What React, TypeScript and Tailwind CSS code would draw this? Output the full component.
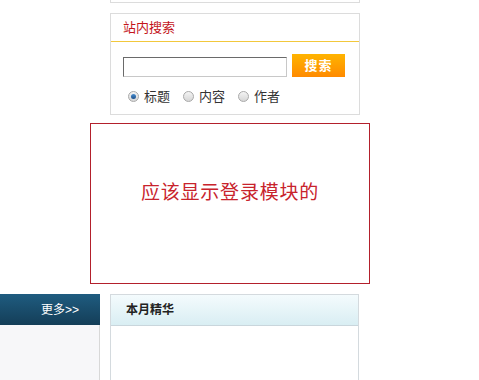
import React from 'react';

const font = { fontFamily: '"Liberation Sans", "Noto Sans CJK SC", sans-serif' };

const Radio: React.FC<{ checked?: boolean; label: string }> = ({ checked, label }) => (
  <label className="flex items-center gap-[5px]">
    <span className="flex h-[11px] w-[11px] items-center justify-center rounded-full border border-[#a9a9a9] bg-gradient-to-b from-[#f4f4f4] to-[#d6d6d6]">
      {checked && <span className="h-[5px] w-[5px] rounded-full bg-gradient-to-b from-[#4a8fd0] to-[#1c4f8a]" />}
    </span>
    <span className="text-[13px] leading-none text-[#333]">{label}</span>
  </label>
);

export default function App() {
  return (
    <div className="h-[380px] w-[479px] overflow-hidden bg-white" style={font}>
      {/* tail of box above */}
      <div className="ml-[110px] h-[3px] w-[250px] border-x border-b border-[#dcdcdc]" />

      {/* 站内搜索 */}
      <div className="ml-[110px] mt-[10px] h-[102px] w-[250px] border border-[#dcdcdc]">
        <div className="flex h-[28px] items-center border-b border-[#f2c83c] pl-[12px] text-[13px] text-[#c4161c]">
          站内搜索
        </div>
        <div className="flex items-end gap-[5px] pl-[12px] pt-[12px]">
          <input
            type="text"
            className="h-[20px] w-[164px] border border-b-[#c8c8c8] border-l-[#6a6a6a] border-r-[#c8c8c8] border-t-[#6a6a6a] outline-none"
          />
          <button className="h-[23px] w-[53px] bg-gradient-to-b from-[#ffb400] to-[#ff8a00] text-[13px] font-bold tracking-[1px] text-white">
            搜索
          </button>
        </div>
        <div className="flex items-center gap-[13px] pl-[17px] pt-[13px]">
          <Radio checked label="标题" />
          <Radio label="内容" />
          <Radio label="作者" />
        </div>
      </div>

      {/* 登录 */}
      <div className="ml-[90px] mt-[8px] h-[161px] w-[280px] border border-[#b3202c] pt-[59px] text-center text-[19px] leading-[20px] tracking-[0.8px] text-[#c8232c]">
        应该显示登录模块的
      </div>

      {/* 下方 */}
      <div className="mt-[10px] flex gap-[10px]">
        <div className="w-[100px]">
          <div className="flex h-[31px] items-center justify-end bg-gradient-to-b from-[#1f5c80] to-[#143e58] pr-[21px] text-[12px] text-white">
            更多&gt;&gt;
          </div>
          <div className="h-[60px] border-r border-[#d8d8d8] bg-[#f7f7f9]" />
        </div>
        <div className="h-[90px] w-[249px] border border-[#d4dade]">
          <div className="flex h-[31px] items-center border-b border-[#c9d6dc] bg-gradient-to-b from-[#f4fbfd] to-[#d9eef3] pl-[15px] text-[12px] font-bold text-[#222]">
            本月精华
          </div>
        </div>
      </div>
    </div>
  );
}
